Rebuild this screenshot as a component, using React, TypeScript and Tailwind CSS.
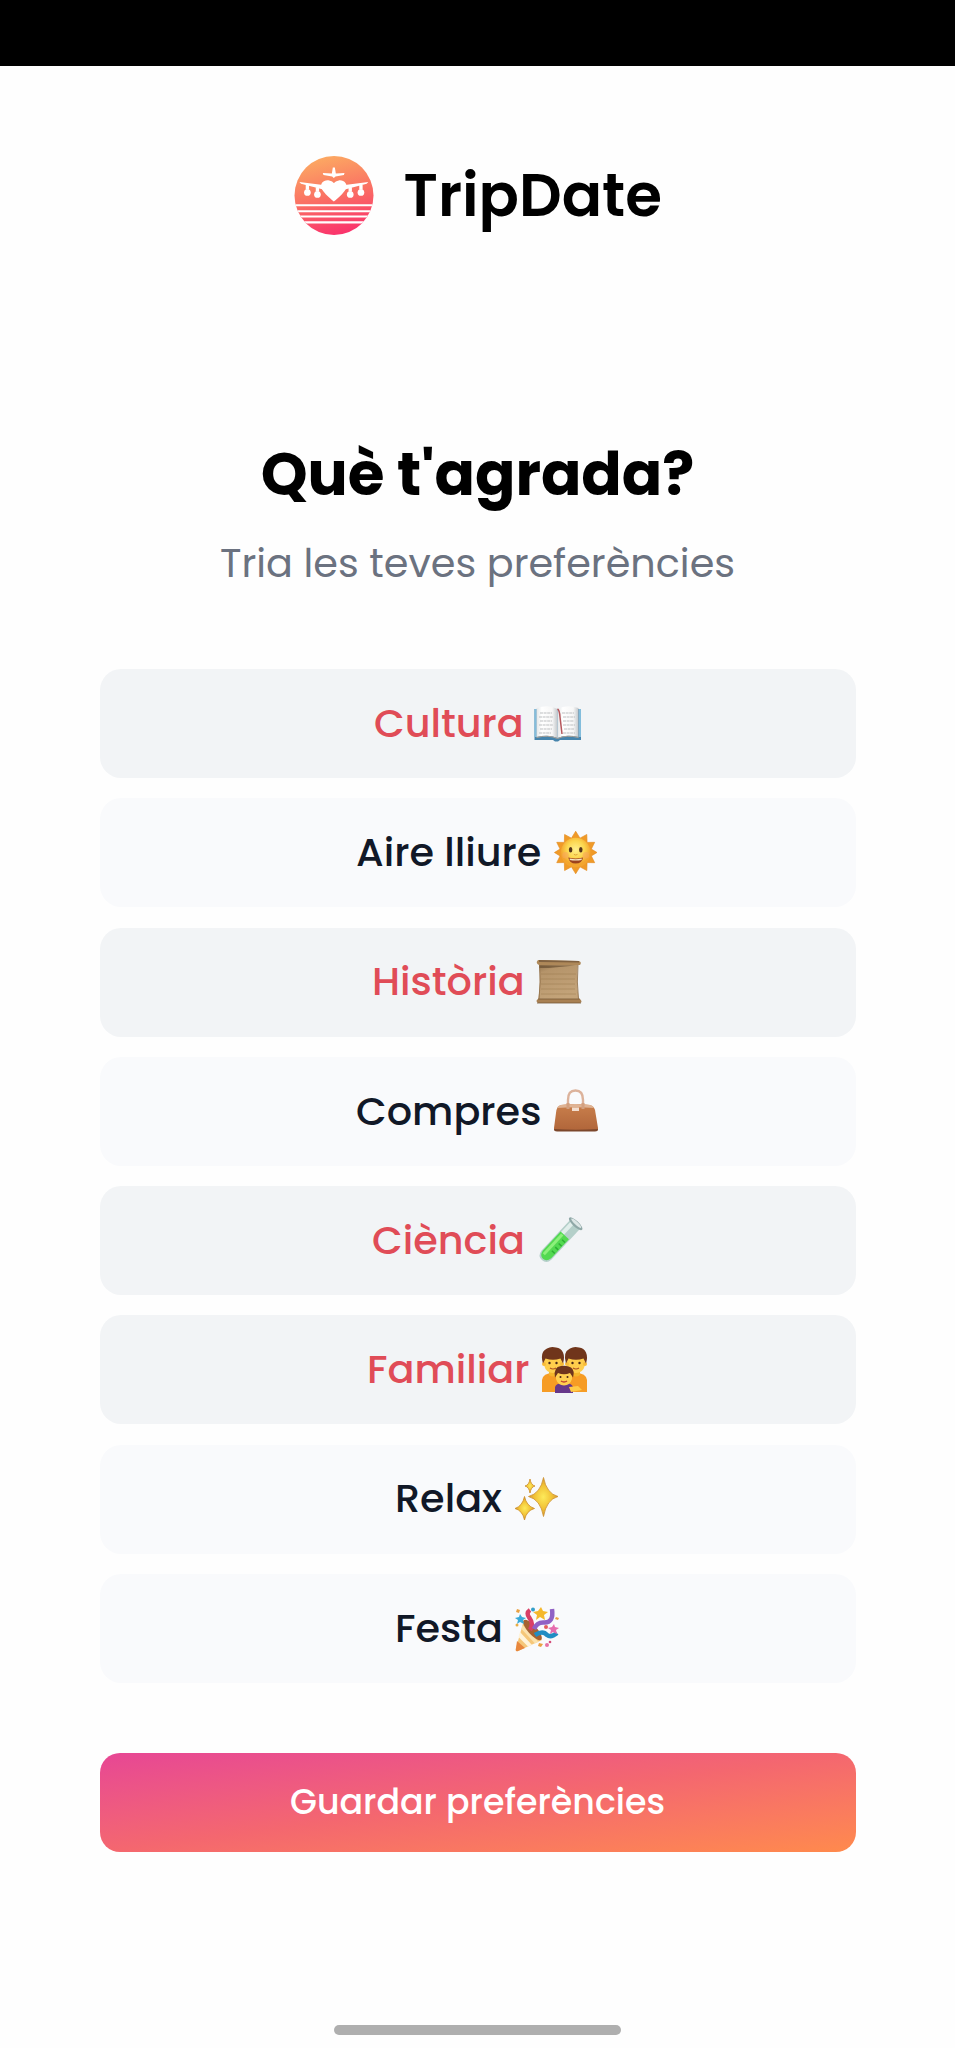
import type { ReactNode } from "react";

function Logo() {
  return (
    <svg viewBox="41 35 239 236" className="h-[79px] w-[80px] shrink-0">
      <defs>
        <linearGradient id="logo" x1="0.35" y1="0" x2="0.6" y2="1">
          <stop offset="0" stopColor="#fcaa62" />
          <stop offset="0.5" stopColor="#fa7164" />
          <stop offset="1" stopColor="#fa316c" />
        </linearGradient>
        <clipPath id="logoClip">
          <circle cx="160.500" cy="153" r="118" />
        </clipPath>
      </defs>
      <circle cx="160.500" cy="153" r="118" fill="url(#logo)" />
      <g fill="#fff" clipPath="url(#logoClip)">
        <path d="M157 69h6l3 18 26-1-2 6-25 4-5 5-5-5-26-4-2-6 27 1z" />
        <path d="M160 171c-12-10-28-24-35-36-10-18 6-30 21-27 7 1 12 5 14 8 3-3 8-7 15-8 15-2 29 11 20 27-7 12-22 26-35 36z" />
        <path d="M57 113l71 9v13l-14-4-52-13zM263 113l-70 9v13l14-4 51-13z" />
        <circle cx="81" cy="144" r="10" />
        <circle cx="111" cy="150" r="10" />
        <circle cx="209" cy="150" r="10" />
        <circle cx="241" cy="144" r="10" />
        <path d="M76 122h10v14h-10zM106 128h10v14h-10zM204 128h10v14h-10zM236 122h10v14h-10z" />
        <path d="M40 179h240v6H40zM40 197h240v6H40zM40 213h240v6H40zM40 230h240v7H40z" />
      </g>
    </svg>
  );
}

function Emoji({ children }: { children: ReactNode }) {
  return (
    <svg viewBox="0 0 48 48" className="h-12 w-12 shrink-0">
      {children}
    </svg>
  );
}

function Book() {
  return (
    <Emoji>
      <defs>
        <linearGradient id="page">
          <stop offset="0" stopColor="#e4e6e7" />
          <stop offset="0.25" stopColor="#fff" />
          <stop offset="0.75" stopColor="#f7f7f7" />
          <stop offset="1" stopColor="#c3c7ca" />
        </linearGradient>
      </defs>
      <path d="M1.500 9H48v31H27l-2 1.500h-3L20 40H1.500z" fill="#4684ac" />
      <path d="M1.500 9h2v28h-2zM46 9h2v28h-2z" fill="#83bddc" />
      <path d="M3.500 8Q16 4 24.500 9v29q-9-4-21-1z" fill="url(#page)" />
      <path d="M45.500 8Q33 4 24.500 9v29q9-4 21-1z" fill="url(#page)" />
      <path d="M3.500 37.500q12-3 21 1 9-4 21-1" fill="none" stroke="#aaa197" strokeWidth="1" />
      <path d="M7 13h12M6 17h14M7 21h12M6 25h14M7 29h12M6 33h12M29 13h12M30 17h12M30 21h11M30 25h12M31 29h10M30 33h12" stroke="#b5b8ba" strokeWidth="0.900" strokeDasharray="3 0.600" />
      <path d="M24.500 9q2 1 2.500 8l2 17" fill="none" stroke="#b6565b" strokeWidth="1.500" />
    </Emoji>
  );
}

function Sun() {
  return (
    <Emoji>
      <defs>
        <radialGradient id="sun" cx="0.5" cy="0.4">
          <stop offset="0" stopColor="#fff08c" />
          <stop offset="0.6" stopColor="#fcd64e" />
          <stop offset="1" stopColor="#f3a52e" />
        </radialGradient>
      </defs>
      <g transform="translate(2.500 1.300) scale(0.925)">
        <path d="M24 1l4.600 7.500L36 4.500l.3 8.600 8.200-.1-3.600 7.300L47 24l-6.100 3.700 3.600 7.300-8.200-.1-.3 8.600-7.400-4L24 47l-4.600-7.500-7.400 4-.3-8.600-8.200.1 3.600-7.300L1 24l6.100-3.700L3.500 13l8.200.1.300-8.600 7.400 4z" fill="#f09a28" stroke="#e38a1e" strokeWidth="0.700" />
        <circle cx="24" cy="24" r="16" fill="url(#sun)" />
        <ellipse cx="18.500" cy="21" rx="1.900" ry="3" fill="#55341b" />
        <ellipse cx="29.500" cy="21" rx="1.900" ry="3" fill="#55341b" />
        <circle cx="13" cy="27" r="3.500" fill="#f7a65d" opacity="0.550" />
        <circle cx="35" cy="27" r="3.500" fill="#f7a65d" opacity="0.550" />
        <path d="M16 29.500q8 2 16 0-1 6.500-8 6.500t-8-6.500z" fill="#9c421d" />
        <path d="M17.500 30.500q6.500 1.500 13 0v1.500q-6.500 1.500-13 0z" fill="#f8e6c5" />
        <path d="M22 26q2 1.500 4 0" fill="none" stroke="#dd9e34" strokeWidth="1" />
      </g>
    </Emoji>
  );
}

function Scroll() {
  return (
    <Emoji>
      <defs>
        <linearGradient id="parchment" x1="0" y1="0" x2="0.4" y2="1">
          <stop offset="0" stopColor="#8a6b45" />
          <stop offset="0.25" stopColor="#b5946a" />
          <stop offset="1" stopColor="#c4a47a" />
        </linearGradient>
      </defs>
      <path d="M4 5h39q-2 18 1 38H3Q6 24 4 5z" fill="url(#parchment)" />
      <path d="M3 2l41 1q3 1 1 4L4 7Q0 5 3 2z" fill="#ae8859" />
      <path d="M4 2l40 1v1.500L4 4z" fill="#806140" />
      <path d="M4 7.500h36L14 10H4z" fill="#5d452a" opacity="0.600" />
      <path d="M3 41h42q3 3 0 4H3q-3-2 0-4z" fill="#a88052" />
      <path d="M3 41h42M2 45h44" stroke="#765938" strokeWidth="0.800" />
      <path d="M4.500 7q1.500 17-.5 34M43 7q-1.500 17 .5 34" fill="none" stroke="#8b6a43" strokeWidth="0.800" />
      <path d="M6 16h35M6 21h34M6 26h34M6 31h34M6 36h35" stroke="#957447" strokeWidth="0.800" opacity="0.500" />
    </Emoji>
  );
}

function Bag() {
  return (
    <Emoji>
      <defs>
        <linearGradient id="leather" x2="0" y2="1">
          <stop offset="0" stopColor="#c97f4c" />
          <stop offset="1" stopColor="#b0653a" />
        </linearGradient>
      </defs>
      <path d="M17 20V13q0-9.500 7.500-9.500T32 13v7" fill="none" stroke="#dcb29b" strokeWidth="2.400" />
      <path d="M10 18q14.500-2 29 0 5 1 5.500 8L47 41q.5 3-3 3H6q-3.500 0-3-3l2-15q.5-7 5-8z" fill="url(#leather)" />
      <path d="M9.500 18q15-2 30 0 3 1 3.500 3-18.500-1.500-37 0 .5-2 3.500-3z" fill="#dfb394" />
      <path d="M15.500 16h3v6h-3zM30.500 16h3v6h-3z" fill="#d3a080" />
      <path d="M21 20.500h7V24h-7z" fill="#f3ded0" />
      <path d="M3 42q22 1.500 44 0 0 2.500-3 2.500H6q-3 0-3-2.500z" fill="#7c472c" />
    </Emoji>
  );
}

function TestTube() {
  return (
    <Emoji>
      <g transform="translate(0.300 0.300) rotate(43 24 24)">
        <path d="M17.300 1h13.400v42q-.5 6.500-6.700 6.500T17.300 43z" fill="#b4cfc9" />
        <path d="M19 2h4v41h-4z" fill="#e1eeeb" />
        <path d="M18.300 16h11.400v26q-1 6-5.700 6t-5.700-6z" fill="#53d951" />
        <path d="M20 17h3v27h-3z" fill="#8df07b" />
        <path d="M25 21h4M25 26h4M25 31h4M25 36h4" stroke="#2eae35" strokeWidth="1.500" />
        <ellipse cx="24" cy="0" rx="8.800" ry="3" fill="#8fa8a7" />
        <ellipse cx="24" cy="-0.800" rx="6.700" ry="1.600" fill="#dce6e5" />
      </g>
    </Emoji>
  );
}

function Adult({ x }: { x: number }) {
  return (
    <g transform={`translate(${x} 0)`}>
      <path d="M1 46V34q1-7 11-7t11 7v12z" fill="#f69c25" />
      <path d="M8 23h8v6q-4 3-8 0z" fill="#f5b62b" />
      <path d="M3 12h18v7q-2 8-9 8t-9-8z" fill="#ffce4c" />
      <circle cx="3" cy="18" r="2" fill="#f8bb39" />
      <circle cx="21" cy="18" r="2" fill="#f8bb39" />
      <path d="M2 17.500Q-1.500 6 6 2.500 10 0 15 1.500q5 .5 7 5 2 4.500 0 11l-2.500-5q-7.500 2.500-15 0z" fill="#70351b" />
      <circle cx="8.500" cy="17" r="1.200" fill="#4a2917" />
      <circle cx="15.500" cy="17" r="1.200" fill="#4a2917" />
      <path d="M9 22q3 2 6 0" fill="none" stroke="#ac4f22" strokeWidth="1.100" />
    </g>
  );
}

function Family() {
  return (
    <Emoji>
      <g transform="translate(1 0)">
        <Adult x={0} />
        <Adult x={23} />
        <path d="M14 47v-6q1-4 9-4t9 4v6z" fill="#67388a" />
        <path d="M15 25h16v8q-2 6.500-8 6.500T15 33z" fill="#ffcf50" />
        <path d="M14 31.500q-2-10.500 6-11.500 6-1 10 1.500 4 3 2 10l-3-4.500q-6 2.500-12 0z" fill="#6f351d" />
        <circle cx="19.500" cy="31" r="1" fill="#4a2917" />
        <circle cx="26.500" cy="31" r="1" fill="#4a2917" />
        <path d="M20 35q3 2 6 0" fill="none" stroke="#bf3f2c" strokeWidth="1.500" />
        <path d="M28 41l9-1 4 4-11 2z" fill="#ffcb47" />
      </g>
    </Emoji>
  );
}

function Sparkles() {
  return (
    <Emoji>
      <defs>
        <radialGradient id="spark">
          <stop offset="0" stopColor="#fdea5a" />
          <stop offset="0.6" stopColor="#f1c136" />
          <stop offset="1" stopColor="#d4972e" />
        </radialGradient>
      </defs>
      <g fill="url(#spark)" stroke="#cb8d2a" strokeWidth="0.800">
        <path d="M31.500 2.500q3 16 14.500 19-11.500 3-14.500 20-3-17-15-20 12-3 15-19z" />
        <path d="M12.500 21.500q2 9.500 10 12-8 2-10 11.500-2-9.500-9.500-11.500 7.500-2.500 9.500-12z" />
        <path d="M18 4q1 6 5 7-4 1-5 7-1-6-5-7 4-1 5-7z" />
      </g>
    </Emoji>
  );
}

function Party() {
  return (
    <Emoji>
      <path d="M12 15l18 20L6 46q-3 1-2-3z" fill="#f5c779" />
      <path d="M5 36l8 7-7 3q-3 1-2-3z" fill="#e8873d" />
      <path d="M8 27l12 13-4 1.500L6.500 32z" fill="#fff4db" />
      <path d="M10.500 20l16 17-3.500 1.500L9.500 24z" fill="#fbe2ae" />
      <ellipse cx="20.500" cy="25" rx="4.500" ry="13" transform="rotate(-42 20.500 25)" fill="#a56232" />
      <path d="M18 25q4-6-.5-12-4-5 .5-8" fill="none" stroke="#d94067" strokeWidth="4.500" />
      <path d="M22 24q3-7 10-6.500 10 .5 8-13.500" fill="none" stroke="#9061c5" strokeWidth="4.500" />
      <path d="M23 30q8-5 12 0 4 3 10-2" fill="none" stroke="#218dc3" strokeWidth="4.500" />
      <path d="M29 2l2 4 5 1-4 3 1 5-5-3-4 3 1-5-4-3 5-1z" fill="#f5b82c" />
      <path d="M8 9l2 3 4 1-3 2 1 4-4-2-3 2 1-4-3-2 4-1z" fill="#39aad9" />
      <path d="M42 19l1 3 4 1-3 2 1 4-4-2-3 2 1-4-3-2 4-1z" fill="#e66cae" />
      <path d="M5 4l3 1-1 3-3-1zM44 12l3 1-1 2-3-1zM27 38l4 1-2 3-3-1z" fill="#eaa142" />
      <circle cx="21" cy="4.500" r="2" fill="#339ec9" />
      <circle cx="34" cy="22" r="2" fill="#e55a5b" />
      <circle cx="35" cy="40" r="2" fill="#e771a5" />
      <circle cx="5" cy="20" r="1.500" fill="#e9ad45" />
      <circle cx="38" cy="37" r="1.300" fill="#d44d79" />
    </Emoji>
  );
}

const options = [
  { label: "Cultura", selected: true, icon: <Book />, text: "w-[159px]" },
  { label: "Aire lliure", selected: false, icon: <Sun />, text: "w-[195px]" },
  { label: "Història", selected: true, icon: <Scroll />, text: "w-[163px]" },
  { label: "Compres", selected: false, icon: <Bag />, text: "w-[195px]" },
  { label: "Ciència", selected: true, icon: <TestTube />, text: "w-[163px]" },
  { label: "Familiar", selected: true, icon: <Family />, text: "w-[173px]" },
  { label: "Relax", selected: false, icon: <Sparkles />, text: "w-[117px]" },
  { label: "Festa", selected: false, icon: <Party />, text: "w-[117px]" },
];

export default function App() {
  return (
    <main className="flex h-[2048px] w-[955px] flex-col items-center bg-[#fefefe] font-['Poppins','Inter',sans-serif]">
      <div className="h-[66px] w-full shrink-0 bg-black" />
      <header className="mt-[89px] flex h-20 w-[368px] shrink-0 items-center gap-[30px] whitespace-nowrap">
        <Logo />
        <span className="text-[59.6px] leading-[80px] font-semibold text-black">TripDate</span>
      </header>
      <h1 className="mt-[199px] h-[80px] shrink-0 text-[59.6px] leading-[80px] font-bold whitespace-nowrap text-black">
        Què t'agrada?
      </h1>
      <p className="mt-[19px] h-[60px] shrink-0 text-[39.75px] leading-[60px] whitespace-nowrap text-[#6b7280]">
        Tria les teves preferències
      </p>
      <div className="mt-[76px] flex w-[756px] shrink-0 flex-col gap-[20.3px]">
        {options.map((o) => (
          <button
            key={o.label}
            className={`flex h-[109px] w-full items-center justify-center rounded-[21px] text-left text-[39.75px] font-medium whitespace-nowrap ${
              o.selected ? "bg-[#f2f4f6] text-[#e04c57]" : "bg-[#f9fafc] text-[#111827]"
            }`}
          >
            <span className={`shrink-0 ${o.text}`}>{o.label}</span>
            {o.icon}
          </button>
        ))}
      </div>
      <button className="mt-[70px] h-[99px] w-[756px] shrink-0 rounded-[20px] bg-gradient-to-br from-[#e74694] via-[#f4676f] to-[#ff8a4c] text-[34.8px] font-medium whitespace-nowrap text-white">
        Guardar preferències
      </button>
      <div className="mt-auto mb-[13px] h-[10px] w-[287px] shrink-0 rounded-full bg-[#afafaf]" />
    </main>
  );
}
